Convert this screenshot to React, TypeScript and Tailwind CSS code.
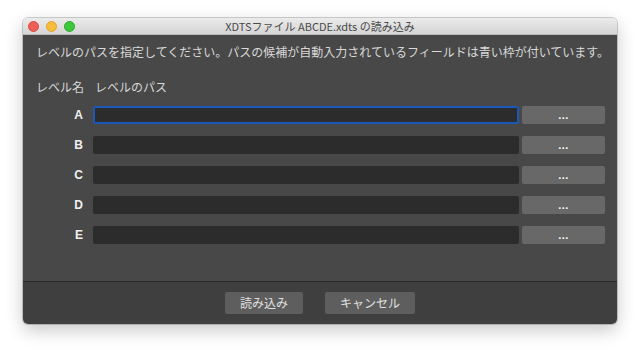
import React from "react";

const rows = ["A", "B", "C", "D", "E"];

export default function App() {
  return (
    <div
      className="w-[641px] h-[353px] bg-white pt-[18px] pl-[23px]"
      style={{ fontFamily: '"Noto Sans CJK JP", "Noto Sans", sans-serif' }}
    >
      <div className="w-[594px] h-[306px] rounded-[5px] overflow-hidden flex flex-col shadow-[0_0_0_1px_rgba(0,0,0,0.18),0_6px_18px_rgba(0,0,0,0.22)]">
        {/* title bar */}
        <div className="relative h-[17px] bg-gradient-to-b from-[#ebebeb] to-[#d5d5d5] border-b border-[#b9b9b9] flex items-center justify-center">
          <div className="absolute left-[5px] top-[3px] flex gap-[7px]">
            <div className="w-[11px] h-[11px] rounded-full bg-[#ec5f57] border border-[#d9493f]" />
            <div className="w-[11px] h-[11px] rounded-full bg-[#f5bd3b] border border-[#dea32b]" />
            <div className="w-[11px] h-[11px] rounded-full bg-[#3ec73c] border border-[#2aa92a]" />
          </div>
          <span className="text-[11px] leading-[14px] text-[#4a4a4a]">
            XDTSファイル ABCDE.xdts の読み込み
          </span>
        </div>

        {/* body */}
        <div className="flex-1 bg-[#484848] pl-[13px] pr-[12px] pt-[10px]">
          <div className="text-[12px] leading-[14px] text-[#d8d8d8] whitespace-nowrap">
            レベルのパスを指定してください。パスの候補が自動入力されているフィールドは青い枠が付いています。
          </div>
          <div className="mt-[21px] flex text-[12px] leading-[14px] text-[#d8d8d8]">
            <span className="w-[59px]">レベル名</span>
            <span>レベルのパス</span>
          </div>
          <div className="mt-[12px] flex flex-col gap-[12px]">
            {rows.map((r, i) => (
              <div key={r} className="flex items-center h-[18px]">
                <div
                  className="w-[47px] text-right text-[12px] font-bold text-[#f0f0f0]"
                  style={{ fontFamily: '"Liberation Sans", sans-serif' }}
                >
                  {r}
                </div>
                <div
                  className={
                    "ml-[10px] w-[426px] h-[18px] rounded-[2px] bg-[#2c2c2c] " +
                    (i === 0 ? "border-2 border-[#1d57b8]" : "")
                  }
                />
                <div className="ml-[3px] w-[83px] h-[18px] rounded-[2px] bg-[#686868] flex items-center justify-center">
                  <span
                    className="text-[11px] font-bold text-white leading-none tracking-[0.5px] mt-[1px]"
                    style={{ fontFamily: '"Liberation Sans", sans-serif' }}
                  >
                    ...
                  </span>
                </div>
              </div>
            ))}
          </div>
        </div>

        {/* footer */}
        <div className="h-[43px] bg-[#3f3f3f] border-t border-[#2a2a2a] flex items-center justify-center gap-[22px]">
          <div className="w-[78px] h-[22px] rounded-[2px] bg-[#5e5e5e] flex items-center justify-center text-[12px] text-[#e0e0e0]">
            読み込み
          </div>
          <div className="w-[90px] h-[22px] rounded-[2px] bg-[#5e5e5e] flex items-center justify-center text-[12px] text-[#e0e0e0]">
            キャンセル
          </div>
        </div>
      </div>
    </div>
  );
}
